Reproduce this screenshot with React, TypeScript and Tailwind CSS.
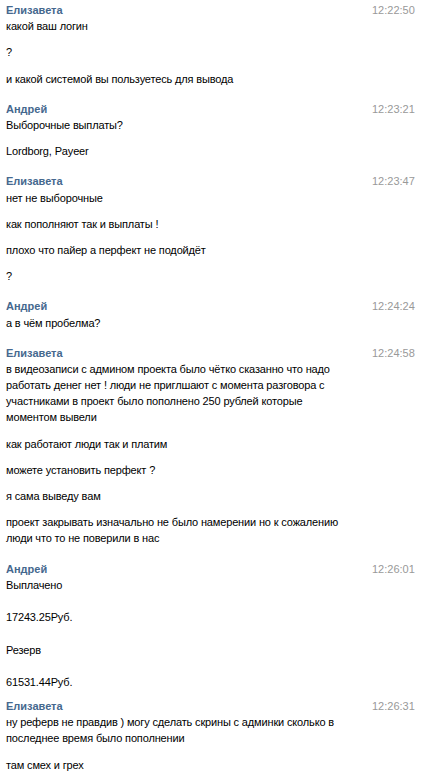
type Msg = { lines: string[] };
type Group = { author: string; time: string; messages: Msg[] };

const groups: Group[] = [
  {
    author: "Елизавета",
    time: "12:22:50",
    messages: [
      { lines: ["какой ваш логин"] },
      { lines: ["?"] },
      { lines: ["и какой системой вы пользуетесь для вывода"] },
    ],
  },
  {
    author: "Андрей",
    time: "12:23:21",
    messages: [{ lines: ["Выборочные выплаты?"] }, { lines: ["Lordborg, Payeer"] }],
  },
  {
    author: "Елизавета",
    time: "12:23:47",
    messages: [
      { lines: ["нет не выборочные"] },
      { lines: ["как пополняют так и выплаты !"] },
      { lines: ["плохо что пайер а перфект не подойдёт"] },
      { lines: ["?"] },
    ],
  },
  {
    author: "Андрей",
    time: "12:24:24",
    messages: [{ lines: ["а в чём пробелма?"] }],
  },
  {
    author: "Елизавета",
    time: "12:24:58",
    messages: [
      {
        lines: [
          "в видеозаписи с админом проекта было чётко сказанно что надо",
          "работать денег нет ! люди не приглшают с момента разговора с",
          "участниками в проект было пополнено 250 рублей которые",
          "моментом вывели",
        ],
      },
      { lines: ["как работают люди так и платим"] },
      { lines: ["можете установить перфект ?"] },
      { lines: ["я сама выведу вам"] },
      {
        lines: [
          "проект закрывать изначально не было намерении но к сожалению",
          "люди что то не поверили в нас",
        ],
      },
    ],
  },
  {
    author: "Андрей",
    time: "12:26:01",
    messages: [
      { lines: ["Выплачено", "", "17243.25Руб.", "", "Резерв", "", "61531.44Руб."] },
    ],
  },
  {
    author: "Елизавета",
    time: "12:26:31",
    messages: [
      {
        lines: [
          "ну реферв не правдив ) могу сделать скрины с админки сколько в",
          "последнее время было пополнении",
        ],
      },
      { lines: ["там смех и грех"] },
    ],
  },
];

export default function App() {
  return (
    <div
      className="w-[440px] h-[783px] overflow-hidden bg-white pt-[2px] text-[11px] leading-[16.2px] text-black"
      style={{ fontFamily: '"Liberation Sans", Arial, sans-serif' }}
    >
      {groups.map((g, i) => (
        <div key={i} className={`flex pl-[6px] ${i === 5 ? "mb-[8px]" : "mb-[14px]"}`}>
          <div className="flex-1">
            <div className="font-bold text-[#45688e]">{g.author}</div>
            <div className="flex flex-col gap-[10px] tracking-[-0.15px]">
              {g.messages.map((m, j) => (
                <div key={j}>
                  {m.lines.map((l, k) => (
                    <div key={k} className="whitespace-nowrap h-[16.2px]">
                      {l}
                    </div>
                  ))}
                </div>
              ))}
            </div>
          </div>
          <div className="w-[68px] text-[#999999]">{g.time}</div>
        </div>
      ))}
    </div>
  );
}
